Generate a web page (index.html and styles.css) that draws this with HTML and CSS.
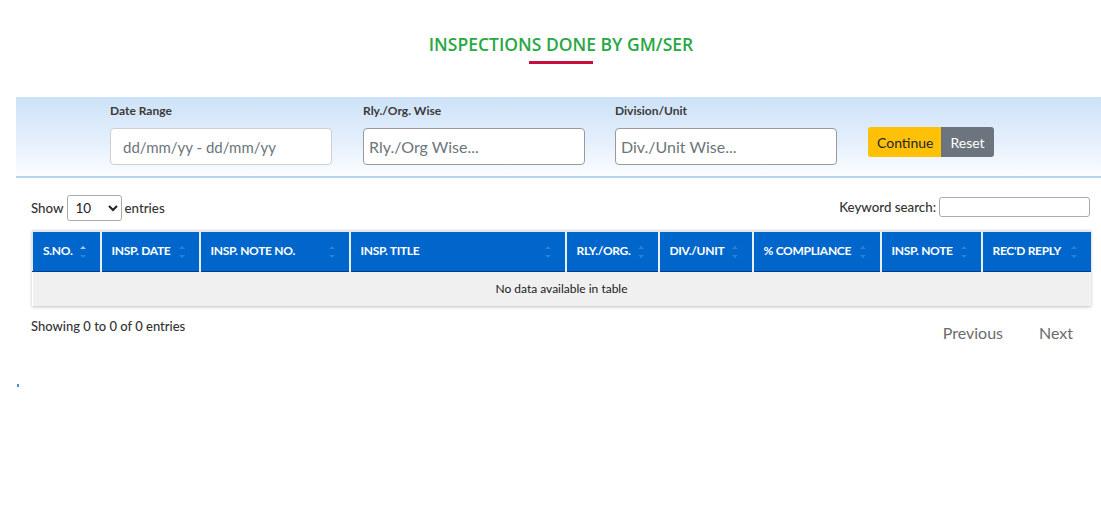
FILE: index.html
```html
<!DOCTYPE html>
<html>
<head>
<meta charset="utf-8">
<link rel="stylesheet" href="styles.css">
</head>
<body>
<div class="page">
  <h2 class="title">INSPECTIONS DONE BY GM/SER</h2>
  <div class="title-bar"></div>

  <div class="filters">
    <div class="field">
      <label>Date Range</label>
      <input class="inp inp-date" type="text" placeholder="dd/mm/yy - dd/mm/yy">
    </div>
    <div class="field">
      <label>Rly./Org. Wise</label>
      <input class="inp inp-dark" type="text" placeholder="Rly./Org Wise...">
    </div>
    <div class="field">
      <label>Division/Unit</label>
      <input class="inp inp-dark" type="text" placeholder="Div./Unit Wise...">
    </div>
    <div class="btns">
      <button class="btn btn-cont">Continue</button><button class="btn btn-reset">Reset</button>
    </div>
  </div>

  <div class="dt">
    <div class="dt-top">
      <div class="len">Show <select class="sel"><option>10</option></select> entries</div>
      <div class="search">Keyword search: <input class="sinp" type="text"></div>
    </div>
    <table class="tbl">
      <colgroup>
        <col style="width:68px"><col style="width:99px"><col style="width:150px"><col style="width:216px"><col style="width:93px"><col style="width:94px"><col style="width:128px"><col style="width:101px"><col style="width:109px">
      </colgroup>
      <thead>
        <tr>
          <th class="asc">S.NO.</th>
          <th>INSP. DATE</th>
          <th>INSP. NOTE NO.</th>
          <th>INSP. TITLE</th>
          <th>RLY./ORG.</th>
          <th>DIV./UNIT</th>
          <th>% COMPLIANCE</th>
          <th>INSP. NOTE</th>
          <th>REC'D REPLY</th>
        </tr>
      </thead>
      <tbody>
        <tr><td colspan="9" class="empty">No data available in table</td></tr>
      </tbody>
    </table>
    <div class="dt-bottom">
      <div class="info">Showing 0 to 0 of 0 entries</div>
      <div class="pager"><span class="pg">Previous</span><span class="pg">Next</span></div>
    </div>
  </div>
  <div class="dot"></div>
</div>
</body>
</html>
```

FILE: styles.css
```css
* { box-sizing: border-box; }
html, body { margin: 0; padding: 0; background: #fff; }
body { font-family: Lato, "Open Sans", "Liberation Sans", sans-serif; color: #212529; }
.page { padding: 0 0 0 16px; }

.title {
  margin: 0;
  padding-top: 33px;
  padding-left: 5px;
  text-align: center;
  font-family: "Open Sans", "Noto Sans", sans-serif;
  font-weight: 600;
  font-size: 17.5px;
  line-height: 22px;
  color: #28a745;
}
.title-bar {
  width: 64px;
  height: 3px;
  background: #c8103e;
  margin: 6px auto 0;
  position: relative;
  left: 2px;
}

.filters {
  margin-top: 33px;
  height: 81px;
  background: linear-gradient(to bottom, #cde2f8 0%, #e4effc 55%, #fbfdff 100%);
  border-bottom: 2px solid #b3d5ef;
  display: flex;
  padding-left: 94px;
}
.field { width: 253px; display: flex; flex-direction: column; }
.field:nth-child(2) { width: 252px; }
.field label {
  font-size: 12px;
  font-weight: 700;
  color: #3a3a3a;
  line-height: 14px;
  margin-top: 7px;
}
.inp {
  margin-top: 10px;
  width: 222px;
  height: 37px;
  border: 1px solid #bdbdbd;
  border-radius: 4px;
  background: #fff;
  font-family: Lato, sans-serif;
  font-size: 16px;
  padding: 0 12px;
  color: #495057;
}
.inp::placeholder { color: #6d757c; }
.inp-date { font-size: 15px; border-color: #cfcfcf; }
.inp-dark { padding-left: 5px; border-color: #9a9a9a; }
.btns { display: flex; margin-top: 30px; height: 30px; }
.btn {
  border: none;
  font-family: Lato, sans-serif;
  font-size: 14px;
  height: 30px;
  padding: 0 9px;
  cursor: pointer;
}
.btn-cont { background: #ffc107; color: #212529; border-radius: 3px 0 0 3px; width: 73px; }
.btn-reset { background: #6c757d; color: #fff; border-radius: 0 3px 3px 0; width: 53px; }

.dt { padding: 0 11px 0 15px; }
.dt-top {
  display: flex;
  justify-content: space-between;
  align-items: center;
  margin-top: 16px;
  height: 28px;
  font-size: 13.3px;
  color: #333;
}
.len { display: flex; align-items: center; gap: 3px; font-weight: 500; }
.sel {
  width: 55px;
  height: 26px;
  border: 1px solid #aaa;
  border-radius: 3px;
  font-family: Lato, sans-serif;
  font-size: 13.5px;
  padding: 0 4px;
  background: #fff;
  color: #222;
}
.search { display: flex; align-items: center; gap: 3px; font-weight: 500; margin-top: -2px; }
.sinp {
  width: 151px;
  height: 20px;
  border: 1px solid #aaa;
  border-radius: 3px;
}

.tbl {
  margin-top: 8px;
  margin-left: 1px;
  width: 1058px;
  border-collapse: collapse;
  table-layout: fixed;
  box-shadow: 0 1px 3px rgba(0,0,0,0.25);
}
.tbl th {
  background: #0066cc;
  color: #fff;
  font-size: 12px;
  font-weight: 700;
  text-align: left;
  height: 40px;
  padding: 0 10px 1px;
  border-left: 2px solid #e8eef5;
  border-top: 2px solid #e0e6ec;
  border-bottom: 1px solid #003f88;
  white-space: nowrap;
  position: relative;
  letter-spacing: -0.3px;
}
.tbl th:first-child { border-left: 1px solid #e0e6ec; }
.tbl th::before, .tbl th::after {
  content: "";
  position: absolute;
  right: 14px;
  border-left: 3px solid transparent;
  border-right: 3px solid transparent;
}
.tbl th::before { top: 14px; border-bottom: 3px solid #2f7fd4; }
.tbl th::after { top: 23px; border-top: 3px solid #2f7fd4; }
.tbl th.asc::before { border-bottom-color: #a9c9ee; }
.tbl td.empty {
  background: #f0f0f0;
  text-align: center;
  font-size: 12px;
  color: #222;
  height: 35px;
  padding: 0;
}

.dt-bottom {
  display: flex;
  justify-content: space-between;
  margin-top: 12px;
}
.info { font-size: 13px; font-weight: 500; color: #333; line-height: 16px; }
.pager { display: flex; gap: 36px; margin-right: 17px; margin-top: 5px; }
.pg { font-size: 16px; color: #6b6b6b; }

.dot { width: 2px; height: 3px; background: #4d8ed0; margin-top: 42px; margin-left: 1px; }
```
